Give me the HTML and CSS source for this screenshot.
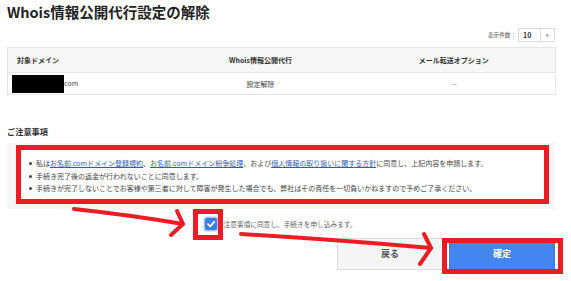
FILE: index.html
```html
<!DOCTYPE html>
<html lang="ja">
<head>
<meta charset="utf-8">
<title>Whois情報公開代行設定の解除</title>
<link rel="stylesheet" href="styles.css">
</head>
<body>
<div class="page">
  <h1 class="title">Whois情報公開代行設定の解除</h1>
  <div class="toolbar">
    <span class="count-label">表示件数：</span>
    <div class="select"><span class="select-val">10</span><span class="select-caret">▾</span></div>
  </div>
  <table class="domains">
    <thead>
      <tr><th class="c-domain">対象ドメイン</th><th class="c-whois">Whois情報公開代行</th><th class="c-mail">メール転送オプション</th></tr>
    </thead>
    <tbody>
      <tr><td class="c-domain"><span class="redact"></span>com</td><td class="c-whois">設定解除</td><td class="c-mail">―</td></tr>
    </tbody>
  </table>
  <h2 class="section">ご注意事項</h2>
  <div class="notice">
    <ul class="notice-list">
      <li>私は<a href="#">お名前.comドメイン登録規約</a>、<a href="#">お名前.comドメイン紛争処理</a>、および<a href="#">個人情報の取り扱いに関する方針</a>に同意し、上記内容を申請します。</li>
      <li>手続き完了後の返金が行われないことに同意します。</li>
      <li>手続きが完了しないことでお客様や第三者に対して障害が発生した場合でも、弊社はその責任を一切負いかねますので予めご了承ください。</li>
    </ul>
  </div>
  <label class="agree">
    <span class="check"><svg width="10" height="10" viewBox="0 0 10 10"><path d="M2 5.2 L4.2 7.3 L8.2 2.8" fill="none" stroke="#fff" stroke-width="1.8" stroke-linecap="round" stroke-linejoin="round"/></svg></span>
    <span class="agree-text">注意事項に同意し、手続きを申し込みます。</span>
  </label>
  <div class="actions">
    <button class="btn btn-back">戻る</button>
    <button class="btn btn-confirm">確定</button>
  </div>
  <svg class="annotations" width="571" height="281" viewBox="0 0 571 281">
    <g fill="none" stroke="#ec1c24" stroke-width="5">
      <rect x="18.5" y="147.5" width="528" height="54"/>
      <rect x="195.5" y="211.5" width="25" height="26"/>
      <rect x="444.5" y="240.5" width="116" height="31"/>
    </g>
    <g fill="none" stroke="#ec1c24" stroke-width="4" stroke-linecap="round" stroke-linejoin="round">
      <path d="M74 209 Q130 215 183 224"/>
      <path d="M177 211 L183 224 L171 235"/>
      <path d="M241 234 Q340 240 431 248"/>
      <path d="M424 234 L431 248 L420 264"/>
    </g>
  </svg>
</div>
</body>
</html>
```

FILE: styles.css
```css
* { box-sizing: border-box; }
html, body { margin: 0; padding: 0; background: #fff; }
body {
  font-family: "Noto Sans CJK JP", "Noto Sans", sans-serif;
  color: #333;
  width: 571px;
  height: 281px;
  overflow: hidden;
}
.page {
  position: relative;
  width: 571px;
  height: 281px;
  padding: 0 16px 0 7px;
}
.title {
  margin: 0;
  font-size: 14.5px;
  line-height: 24px;
  font-weight: 700;
  color: #222;
  letter-spacing: 0;
}
.toolbar {
  margin-top: 4px;
  display: flex;
  justify-content: flex-end;
  align-items: center;
  gap: 2px;
  height: 14px;
}
.count-label {
  font-size: 5.6px;
  color: #555;
}
.select {
  width: 37px;
  height: 14px;
  border: 1px solid #dcdcdc;
  display: flex;
  align-items: center;
  font-size: 7px;
  background: #fff;
}
.select-val {
  flex: 1;
  padding-left: 4px;
  font-weight: 700;
  color: #333;
}
.select-caret {
  width: 14px;
  height: 100%;
  border-left: 1px solid #dcdcdc;
  text-align: center;
  font-size: 5px;
  line-height: 12px;
  color: #777;
}
.domains {
  margin-top: 5px;
  width: 548px;
  border-collapse: collapse;
  border: 1px solid #e6e6e6;
  font-size: 7px;
  table-layout: fixed;
}
.domains th {
  height: 25px;
  background: #f7f7f7;
  font-weight: 700;
  color: #333;
  border-bottom: 1px solid #e6e6e6;
  padding: 0;
}
.domains td {
  height: 22px;
  padding: 0;
  color: #444;
}
.domains .c-domain { width: 161px; text-align: left; padding-left: 9px; }
.domains td.c-domain { padding-left: 4px; }
.domains .c-whois { width: 184px; text-align: center; }
.domains .c-mail { width: 203px; text-align: center; }
.redact {
  display: inline-block;
  width: 52px;
  height: 18px;
  background: #000;
  vertical-align: middle;
}
.section {
  margin: 28px 0 0;
  font-size: 8.2px;
  line-height: 16px;
  font-weight: 700;
  color: #333;
}
.notice {
  margin-top: 4px;
  width: 547px;
  background: #f6f6f6;
  padding: 5px 7px 5px 9px;
}
.notice-list {
  margin: 0;
  background: #fff;
  list-style: none;
  padding: 9px 0 9px 20px;
  font-size: 7px;
  line-height: 12.5px;
  color: #444;
  white-space: nowrap;
}
.notice-list li {
  position: relative;
}
.notice-list li::before {
  content: "";
  position: absolute;
  left: -7px;
  top: 5px;
  width: 3px;
  height: 3px;
  border-radius: 50%;
  background: #444;
}
.notice-list a {
  color: #2b5fb4;
  text-decoration: underline;
}
.agree {
  margin-top: 8px;
  height: 14px;
  display: flex;
  justify-content: center;
  align-items: center;
  gap: 6px;
  width: 548px;
}
.check {
  width: 12px;
  height: 12px;
  border-radius: 2px;
  background: #3b7fe6;
  box-shadow: 0 0 0 1.5px #a9c8f5;
  display: flex;
  align-items: center;
  justify-content: center;
}
.check svg { display: block; }
.agree-text {
  font-size: 6.7px;
  color: #666;
}
.actions {
  margin-top: 7px;
  display: flex;
  justify-content: flex-end;
  gap: 6px;
  width: 548px;
}
.btn {
  width: 106px;
  height: 32px;
  font-family: inherit;
  font-size: 9px;
  padding: 0;
  cursor: pointer;
}
.btn-back {
  background: #f5f5f5;
  border: 1px solid #dedede;
  color: #555;
  font-weight: 700;
}
.btn-confirm {
  background: #4386f0;
  border: 1px solid #3a7be0;
  color: #fff;
  font-weight: 700;
}
.annotations {
  position: absolute;
  left: 0;
  top: 0;
  pointer-events: none;
}
```
